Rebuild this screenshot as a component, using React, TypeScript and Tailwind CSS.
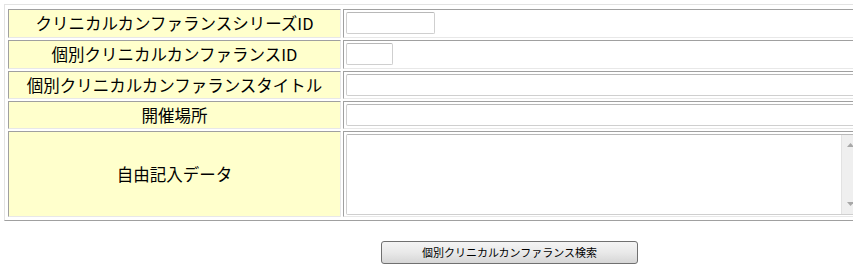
import React from 'react';

const labelCell =
  'bg-[#ffffcc] border border-t-[#a0a0a0] border-l-[#a0a0a0] border-b-[#e8e8e8] border-r-[#e8e8e8] flex items-center justify-center text-[16.5px] text-black';
const valueCell =
  'bg-white border border-t-[#a0a0a0] border-l-[#a0a0a0] border-b-[#e8e8e8] border-r-[#e8e8e8] px-[2px] pt-[2px]';
const inputBox =
  'block h-[22px] bg-white border border-[#cfcfcf] border-t-[#b8b8b8] rounded-[2px]';

const App: React.FC = () => {
  return (
    <div
      className="w-[853px] h-[270px] overflow-hidden bg-white"
      style={{ fontFamily: '"Noto Sans CJK JP", "Noto Sans", sans-serif' }}
    >
      <div className="pt-[4px] pl-[4px]">
        {/* Form table */}
        <div className="w-[880px] border border-t-[#e3e3e3] border-l-[#e3e3e3] border-b-[#a0a0a0] border-r-[#a0a0a0] pl-[3px] pt-[4px] pb-[3px] grid grid-cols-[333px_1fr] gap-[2px]">
          <div className={`${labelCell} h-[29px]`}>クリニカルカンファランスシリーズID</div>
          <div className={valueCell}>
            <input className={`${inputBox} w-[89px]`} />
          </div>

          <div className={`${labelCell} h-[29px]`}>個別クリニカルカンファランスID</div>
          <div className={valueCell}>
            <input className={`${inputBox} w-[47px]`} />
          </div>

          <div className={`${labelCell} h-[28px]`}>個別クリニカルカンファランスタイトル</div>
          <div className={valueCell}>
            <input className={`${inputBox} w-[600px]`} />
          </div>

          <div className={`${labelCell} h-[28px]`}>開催場所</div>
          <div className={valueCell}>
            <input className={`${inputBox} w-[600px]`} />
          </div>

          <div className={`${labelCell} h-[86px]`}>自由記入データ</div>
          <div className={valueCell}>
            <div className="flex w-[513px] h-[81px] border border-[#cfcfcf] border-t-[#b8b8b8] rounded-[2px] overflow-hidden">
              <div className="flex-1 bg-white" />
              {/* Scrollbar */}
              <div className="w-[17px] bg-[#efefef] border-l border-[#e2e2e2] flex flex-col items-center justify-between py-[8px]">
                <svg width="7" height="4" viewBox="0 0 7 4">
                  <path d="M0 4 L3.5 0 L7 4 Z" fill="#a8a8a8" />
                </svg>
                <svg width="7" height="4" viewBox="0 0 7 4">
                  <path d="M0 0 L3.5 4 L7 0 Z" fill="#a8a8a8" />
                </svg>
              </div>
            </div>
          </div>
        </div>

        {/* Search button */}
        <div className="pl-[377px] pt-[20px]">
          <button className="w-[257px] h-[23px] rounded-[3px] border border-[#707070] bg-gradient-to-b from-[#f4f4f4] via-[#e9e9e9] to-[#d6d6d6] text-[11px] text-black flex items-center justify-center leading-none">
            個別クリニカルカンファランス検索
          </button>
        </div>
      </div>
    </div>
  );
};

export default App;
